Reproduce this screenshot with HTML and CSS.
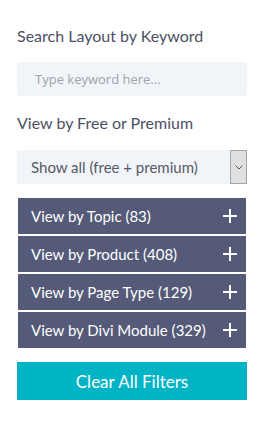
FILE: index.html
```html
<!DOCTYPE html>
<html lang="en">
<head>
  <meta charset="UTF-8">
  <meta name="viewport" content="width=device-width, initial-scale=1.0">
  <title>Layout filters</title>
  <link rel="stylesheet" href="styles.css">
</head>
<body>
  <aside class="filters">
    <h3 class="filter-title">Search Layout by Keyword</h3>
    <input type="text" class="search-input" placeholder="Type keyword here...">

    <h3 class="filter-title">View by Free or Premium</h3>
    <div class="select-box">
      <span class="select-text">Show all (free + premium)</span>
      <span class="select-arrow">
        <svg width="8" height="5" viewBox="0 0 8 5"><path d="M0.5 0.5 L4 4 L7.5 0.5" fill="none" stroke="#555" stroke-width="1"/></svg>
      </span>
    </div>

    <div class="toggles">
      <div class="toggle"><span>View by Topic (83)</span><span class="plus"></span></div>
      <div class="toggle"><span>View by Product (408)</span><span class="plus"></span></div>
      <div class="toggle"><span>View by Page Type (129)</span><span class="plus"></span></div>
      <div class="toggle"><span>View by Divi Module (329)</span><span class="plus"></span></div>
    </div>

    <button class="btn-clear">Clear All Filters</button>
  </aside>
</body>
</html>
```

FILE: styles.css
```css
body {
  margin: 0;
  padding: 0;
  background: #fff;
  font-family: 'Lato', sans-serif;
}

.filters {
  padding: 27px 21px 0 17px;
  display: flex;
  flex-direction: column;
}

.filter-title {
  margin: 0;
  font-size: 16px;
  font-weight: 400;
  line-height: 18px;
  color: #4c5065;
}

.search-input {
  margin: 17px 0 18px;
  height: 34px;
  box-sizing: border-box;
  border: none;
  border-radius: 3px;
  background-color: #f1f4f8;
  padding: 0 18px;
  font-family: 'Open Sans', sans-serif;
  font-size: 13px;
  outline: none;
}

.search-input::placeholder {
  color: #a0a3ab;
}

.select-box {
  margin-top: 18px;
  height: 34px;
  display: flex;
  align-items: stretch;
  background-color: #f1f4f8;
}

.select-text {
  flex: 1;
  display: flex;
  align-items: center;
  padding-left: 14px;
  font-size: 15px;
  color: #555a66;
}

.select-arrow {
  width: 15px;
  border: 1px solid #a4a4a4;
  background-color: #e0e0e0;
  display: flex;
  align-items: center;
  justify-content: center;
}

.toggles {
  margin: 14px 1px 0;
  display: flex;
  flex-direction: column;
  gap: 2px;
}

.toggle {
  height: 36px;
  background-color: #545a77;
  color: #fff;
  display: flex;
  align-items: center;
  justify-content: space-between;
  padding: 0 9px 0 13px;
  font-size: 15px;
}

.plus {
  width: 14px;
  height: 14px;
  position: relative;
}

.plus::before,
.plus::after {
  content: "";
  position: absolute;
  background: #fff;
}

.plus::before {
  left: 0;
  right: 0;
  top: 6px;
  height: 2px;
}

.plus::after {
  top: 0;
  bottom: 0;
  left: 6px;
  width: 2px;
}

.btn-clear {
  margin-top: 14px;
  height: 38px;
  border: none;
  background-color: #00b4c6;
  color: #fff;
  font-family: 'Lato', sans-serif;
  font-size: 17px;
  cursor: pointer;
}
```
